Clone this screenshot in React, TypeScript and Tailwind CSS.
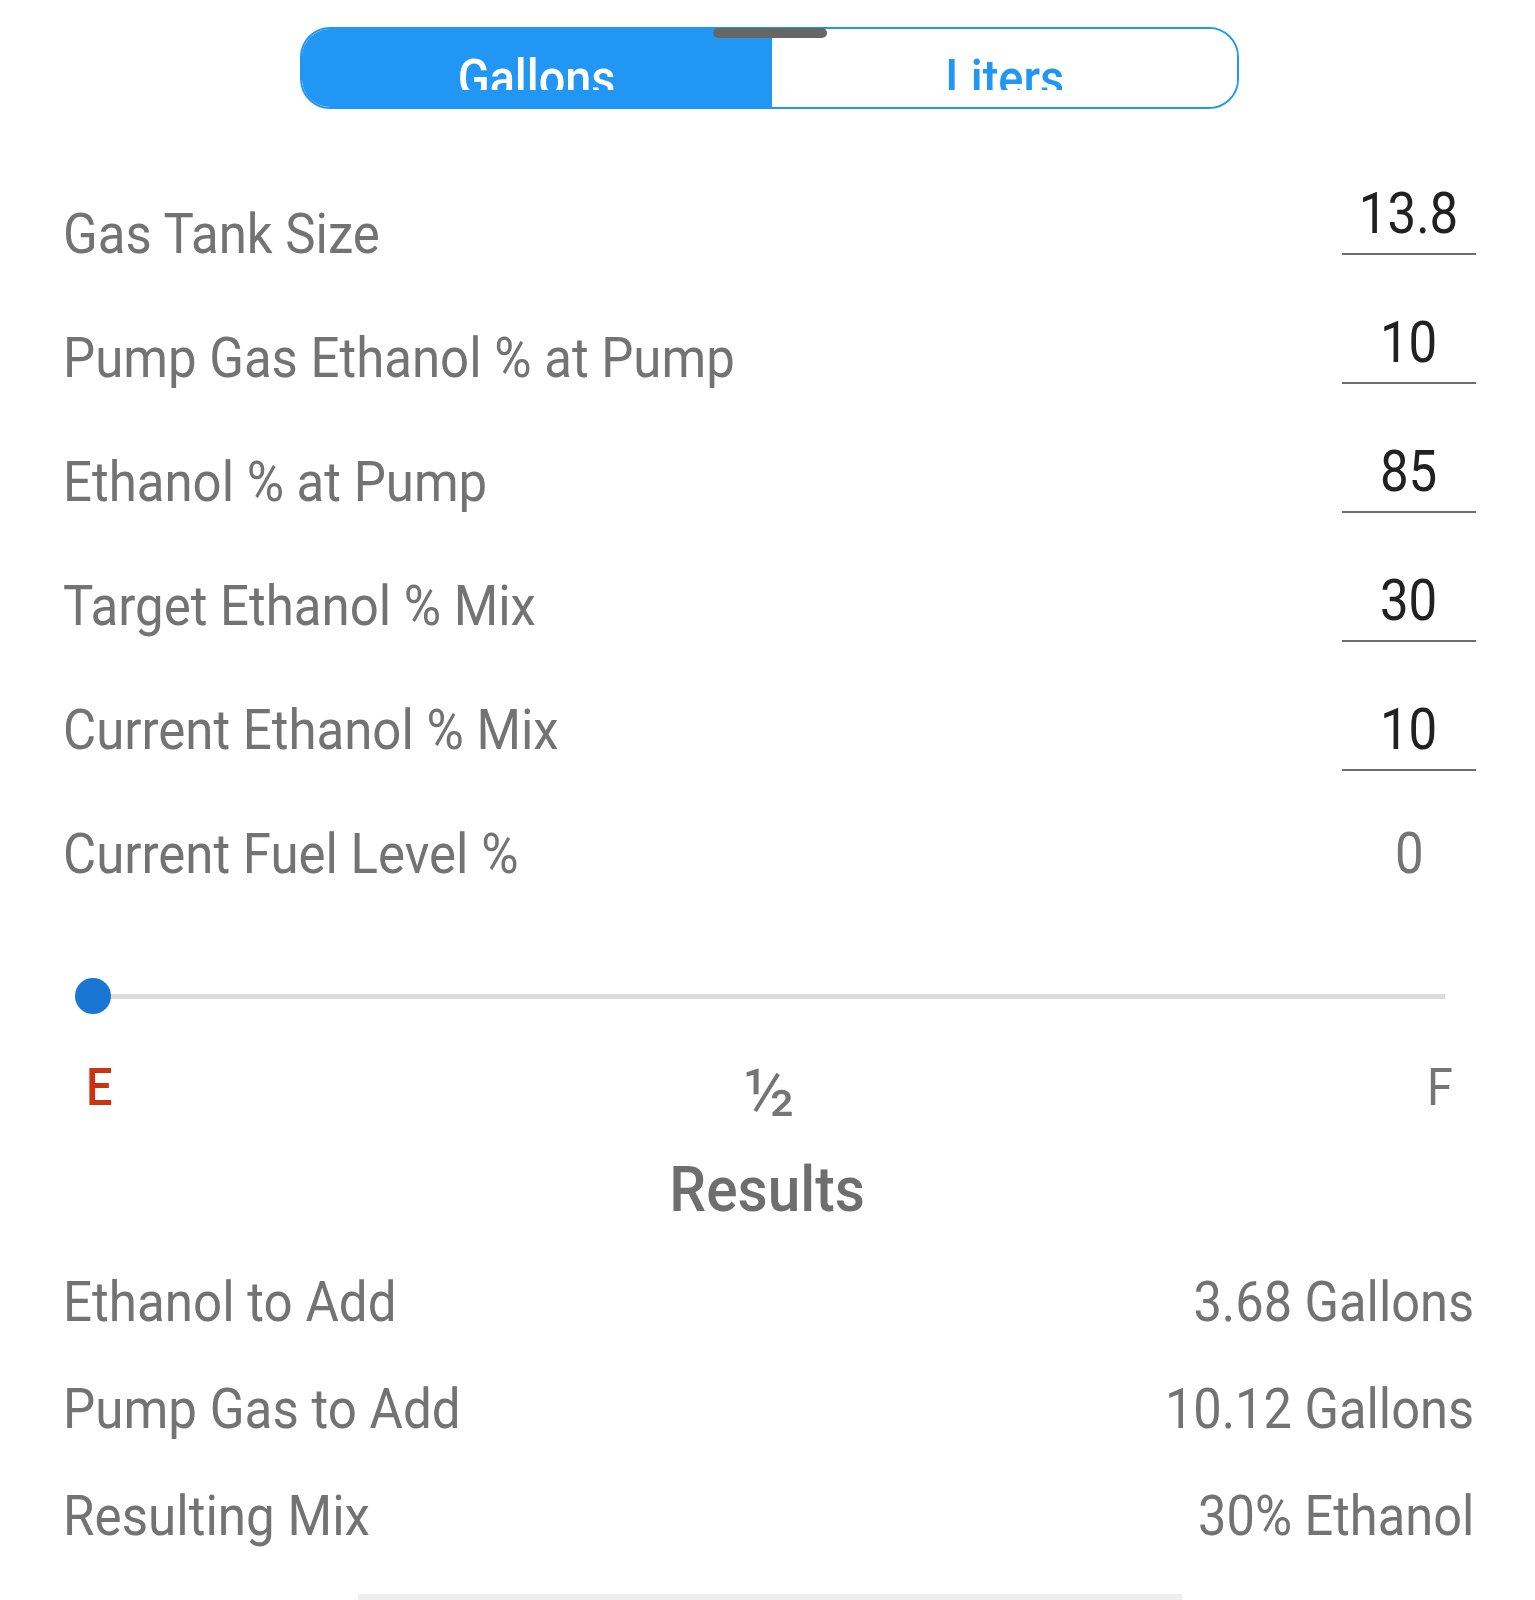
import React from "react";

const FIELDS: { label: string; value: string; input: boolean }[] = [
  { label: "Gas Tank Size", value: "13.8", input: true },
  { label: "Pump Gas Ethanol % at Pump", value: "10", input: true },
  { label: "Ethanol % at Pump", value: "85", input: true },
  { label: "Target Ethanol % Mix", value: "30", input: true },
  { label: "Current Ethanol % Mix", value: "10", input: true },
  { label: "Current Fuel Level %", value: "0", input: false },
];

const RESULTS: { label: string; value: string }[] = [
  { label: "Ethanol to Add", value: "3.68 Gallons" },
  { label: "Pump Gas to Add", value: "10.12 Gallons" },
  { label: "Resulting Mix", value: "30% Ethanol" },
];

function UnitToggle() {
  return (
    <div className="relative ml-[300px] mt-[27px] w-[939px]">
      <div className="flex h-[82px] overflow-hidden rounded-[30px] border-2 border-[#2196f3]">
        <div className="w-[470px] bg-[#2196f3]">
          <div className="h-[61px] overflow-hidden pt-[24px] text-center text-[52px] font-medium leading-none text-white">
            <span className="inline-block scale-x-[0.9]">Gallons</span>
          </div>
        </div>
        <div className="flex-1 bg-white">
          <div className="h-[61px] overflow-hidden pt-[24px] text-center text-[52px] font-medium leading-none text-[#2196f3]">
            <span className="inline-block scale-x-[0.9]">Liters</span>
          </div>
        </div>
      </div>
      {/* drag handle sitting over the top edge */}
      <div className="absolute left-[413px] top-[1px] h-[10px] w-[114px] rounded-full bg-[#666666]" />
    </div>
  );
}

export default function App() {
  return (
    <div className="relative h-[1600px] w-[1535px] overflow-hidden bg-white font-['Roboto','Liberation_Sans',sans-serif]">
      <UnitToggle />

      <div className="flex pl-[63px] pr-[59px]">
        <div className="mt-[63px] flex-1">
          {FIELDS.map((f) => (
            <div key={f.label} className="h-[124px] text-[56px] leading-[124px] text-[#737373]">
              <span className="inline-block origin-left scale-x-[0.91]">{f.label}</span>
            </div>
          ))}
        </div>
        <div className="mt-[17px] w-[134px]">
          {FIELDS.map((f) => (
            <div key={f.label} className="flex h-[129px] flex-col justify-end">
              <div
                className={
                  f.input
                    ? "border-b-2 border-[#6d6d6d] pb-[11px] text-center text-[58px] leading-[58px] text-[#212121]"
                    : "border-b-2 border-transparent pb-[16px] text-center text-[58px] leading-[58px] text-[#757575]"
                }
              >
                <span className="inline-block scale-x-[0.88]">{f.value}</span>
              </div>
            </div>
          ))}
        </div>
      </div>

      {/* fuel level slider */}
      <div className="relative ml-[75px] mt-[62px] flex h-[36px] w-[1370px] items-center">
        <div className="h-[5px] w-full bg-[#dcdcdc]" />
        <div className="absolute left-0 top-0 h-[36px] w-[36px] rounded-full bg-[#1976d2]" />
      </div>

      <div className="mt-[43px] grid grid-cols-3 items-start pl-[86px] pr-[82px] text-[55px] leading-[55px] text-[#757575]">
        <span className="text-left">
          <span className="inline-block origin-left scale-x-[0.9] pt-[3px] text-[52px] font-medium text-[#cc3311]">E</span>
        </span>
        <span className="mt-[4px] text-center text-[66px] leading-[66px]">½</span>
        <span className="text-right">
          <span className="inline-block origin-right scale-x-[0.9] pt-[3px] text-[52px]">F</span>
        </span>
      </div>

      <div className="mt-[31px] text-center text-[63px] font-medium leading-none text-[#6e6e6e]">
        <span className="inline-block scale-x-[0.93]">Results</span>
      </div>

      <div className="mt-[28px] pl-[63px] pr-[61px]">
        {RESULTS.map((r) => (
          <div key={r.label} className="flex h-[107px] items-center justify-between text-[55px] leading-[107px] text-[#737373]">
            <span className="inline-block origin-left scale-x-[0.93]">{r.label}</span>
            <span className="inline-block origin-right scale-x-[0.92]">{r.value}</span>
          </div>
        ))}
      </div>

      <div className="ml-[358px] mt-[24px] h-[10px] w-[824px] bg-[#eeeeee]" />
    </div>
  );
}
